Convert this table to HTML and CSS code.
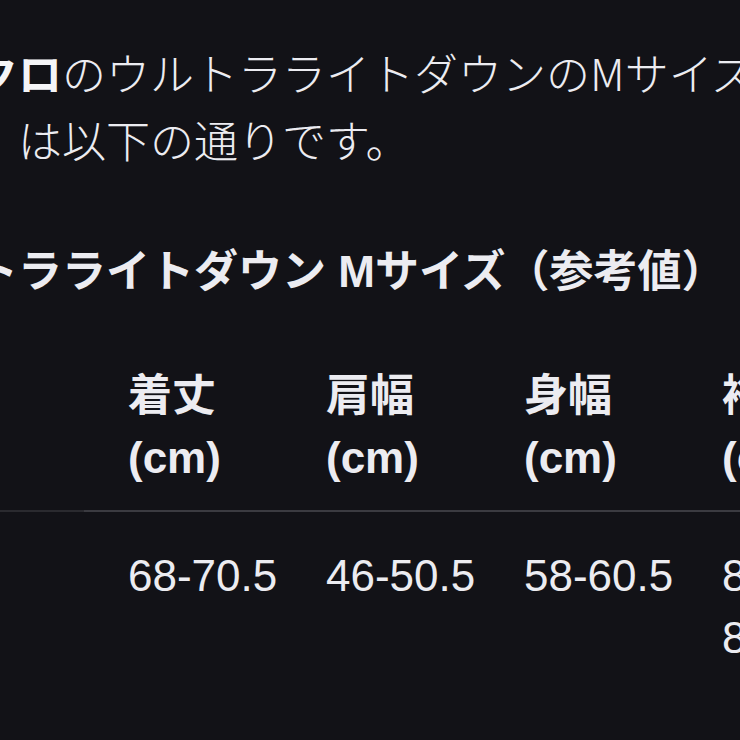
FILE: index.html
```html
<!DOCTYPE html>
<html lang="ja">
<head>
<meta charset="utf-8">
<title>ユニクロ ウルトラライトダウン Mサイズ</title>
<link rel="stylesheet" href="styles.css">
</head>
<body>
<main class="answer">
  <p class="intro"><strong>ユニクロ</strong>のウルトラライトダウンのMサイズの寸法（<br>目安）は以下の通りです。</p>
  <h3 class="title">ウルトラライトダウン Mサイズ（参考値）</h3>
  <table class="sizes">
    <colgroup>
      <col class="c"><col class="c"><col class="c"><col class="c"><col class="c">
    </colgroup>
    <thead>
      <tr>
        <th class="first"></th>
        <th>着丈<br>(cm)</th>
        <th>肩幅<br>(cm)</th>
        <th>身幅<br>(cm)</th>
        <th>裄丈<br>(cm)</th>
      </tr>
    </thead>
    <tbody>
      <tr>
        <td>M</td>
        <td>68-70.5</td>
        <td>46-50.5</td>
        <td>58-60.5</td>
        <td>84-<br>86.5</td>
      </tr>
    </tbody>
  </table>
</main>
</body>
</html>
```
FILE: styles.css
```css
html, body {
  margin: 0;
  padding: 0;
  overflow: hidden;
  background: #121217;
}

body {
  width: 740px;
  height: 740px;
  color: #ececf1;
  font-family: "Liberation Sans", "Noto Sans CJK JP", sans-serif;
  font-size: 44px;
}

.answer {
  margin-left: -114px;
  padding-top: 39px;
  white-space: nowrap;
}

.intro {
  margin: 0;
  font-family: "Noto Sans CJK JP", sans-serif;
  line-height: 67px;
  font-weight: 300;
}

.intro strong {
  font-weight: 700;
  color: #f5f5f7;
}

.title {
  margin: 65px 0 0;
  font-size: 44px;
  line-height: 67px;
  font-weight: 700;
  color: #ececf1;
}

.sizes {
  margin-top: 60px;
  border-collapse: collapse;
  table-layout: fixed;
  width: 990px;
}

.sizes .c {
  width: 198px;
}

.sizes th,
.sizes td {
  text-align: left;
  vertical-align: top;
  padding: 0 0 0 44px;
  line-height: 61.6px;
}

.sizes th {
  font-weight: 700;
  padding-bottom: 22px;
  border-bottom: 2px solid #3b3b41;
}

.sizes th.first {
  border-bottom-color: #2a2a2f;
}

.sizes td {
  font-weight: 400;
  padding-top: 33px;
}
```
